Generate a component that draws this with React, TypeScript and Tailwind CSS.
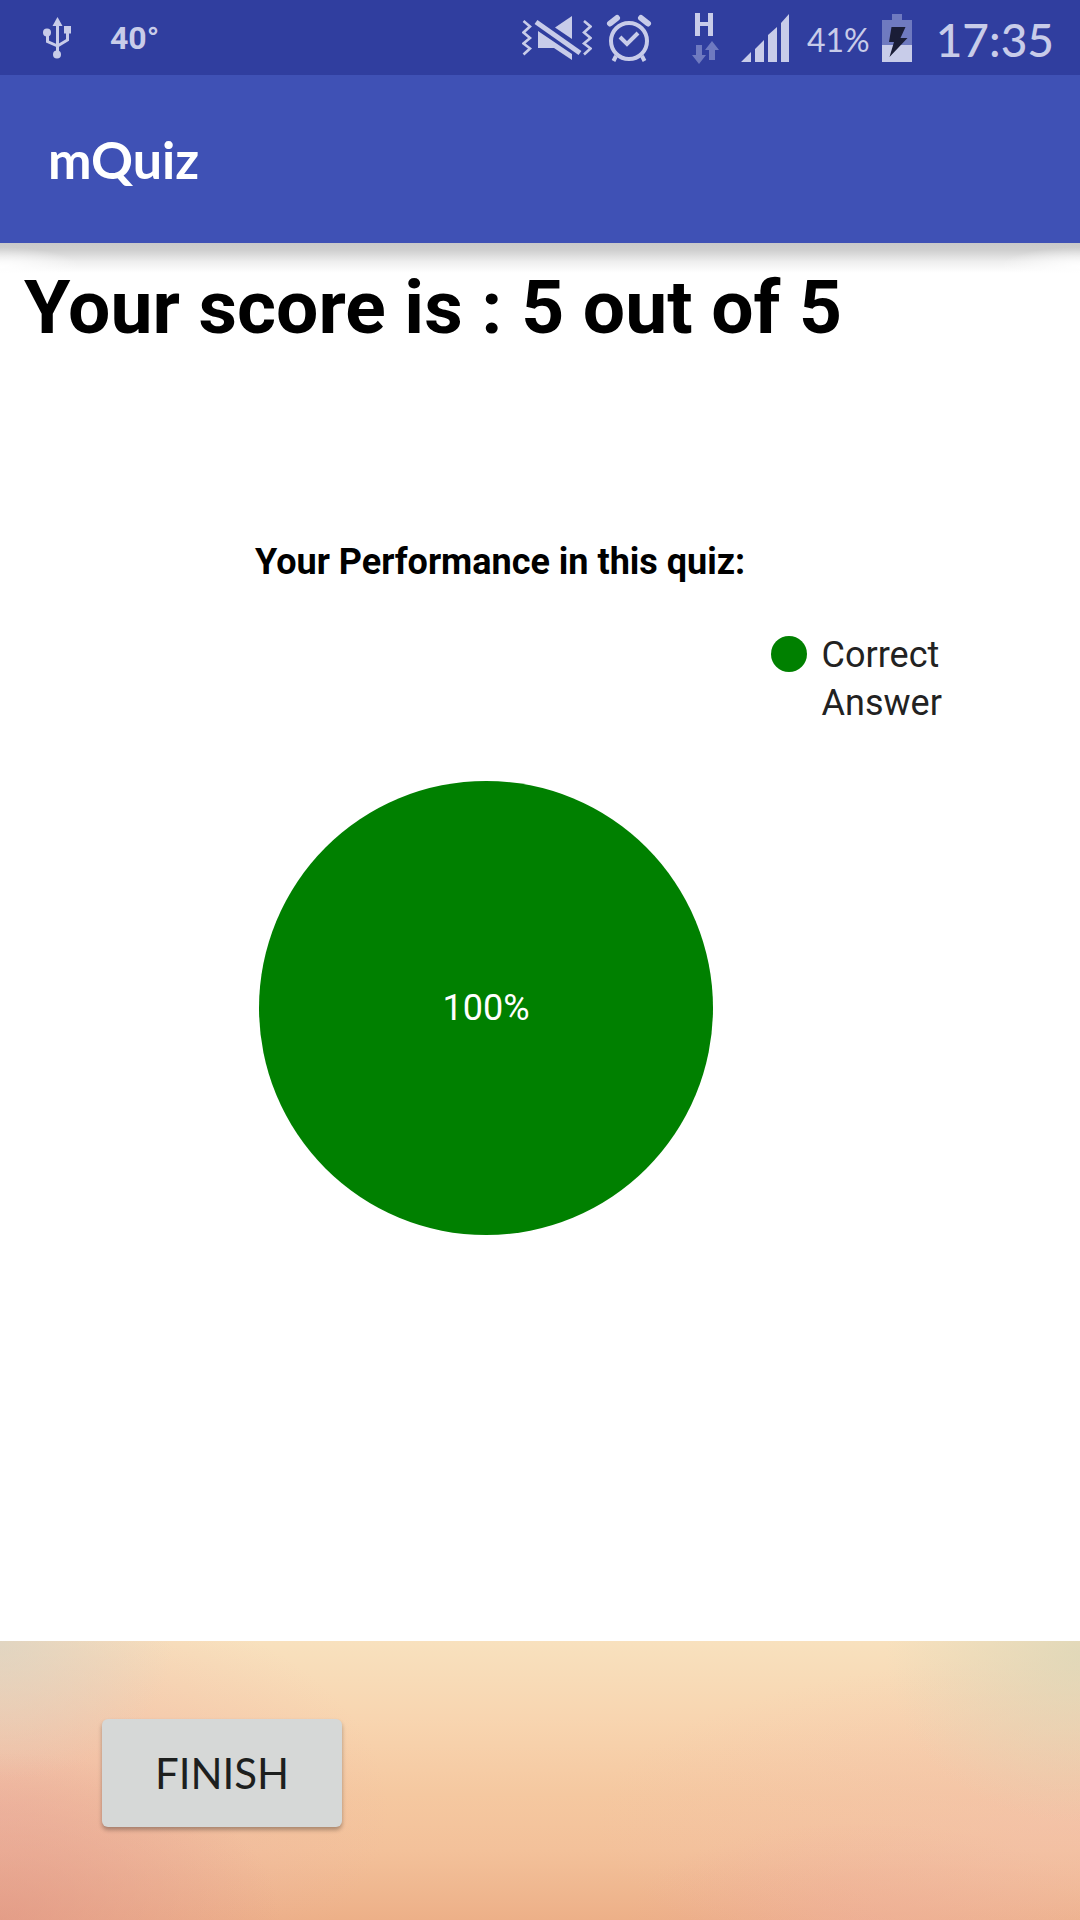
import React from "react";

const ICON = "#c8cce9";

function UsbIcon() {
  return (
    <svg width="30" height="44" viewBox="42 16 30 44" aria-label="USB connected" role="img">
      <g fill={ICON}>
        <path d="M57.500 17l5 9h-10z" />
        <rect x="56" y="24" width="3" height="30" />
        <circle cx="57" cy="54.500" r="4" />
        <circle cx="47" cy="32.500" r="4" />
        <rect x="64" y="26" width="7" height="7.500" />
      </g>
      <path d="M47.500 33v8.500l10 4.500M67.500 32v8l-10 6" fill="none" stroke={ICON} strokeWidth="3" />
    </svg>
  );
}

function MutedIcon() {
  return (
    <svg width="70" height="46" viewBox="522 14 70 46" aria-label="Vibrate" role="img">
      <g fill="none" stroke={ICON} strokeWidth="2.600">
        <path d="M523.500 20l6.500 5.500-6.500 6 6.500 5.500-6.500 5.500 6.500 5-6.500 6" />
        <path d="M584 20l6.500 5.500-6.500 6 6.500 5.500-6.500 5.500 6.500 5-6.500 6" />
      </g>
      <g fill={ICON}>
        <path d="M572 15v23l-17-11.500z" />
        <path d="M538 30l34 23v6l-18-12h-16z" />
      </g>
      <path d="M536 21l44 31" stroke={ICON} strokeWidth="5" />
    </svg>
  );
}

function AlarmIcon() {
  return (
    <svg width="46" height="48" viewBox="606 13 46 48" aria-label="Alarm set" role="img">
      <g fill="none" stroke={ICON}>
        <circle cx="629" cy="40" r="18" strokeWidth="4" />
        <path d="M620 36l7 7 11-11" strokeWidth="4" />
        <path d="M616 55l-2.500 5M642 55l2.500 5" strokeWidth="4" />
        <path d="M610 22.500l7-5.500M648 22.500l-7-5.500" strokeWidth="6" strokeLinecap="round" />
      </g>
    </svg>
  );
}

function DataIcon() {
  return (
    <svg width="28" height="54" viewBox="692 10 28 54" aria-label="H mobile data" role="img">
      <path d="M695 12h5v9h8v-9h5v23h-5v-10h-8v10h-5z" fill={ICON} />
      <path d="M696 44h6v10h4l-7 9-7-9h4z" fill="#6f7ac0" />
      <path d="M709 59v-10h-4l7-9 7 9h-4v10z" fill="#6f7ac0" />
    </svg>
  );
}

function SignalIcon() {
  return (
    <svg width="50" height="50" viewBox="739 12 50 50" aria-label="Signal strength" role="img">
      <path
        d="M740 61l10-10v10zM754 61v-13l9-9v22zM767 61v-27l9-8v35zM780 61v-39l8-9v48z"
        fill={ICON}
      />
    </svg>
  );
}

function BatteryIcon() {
  return (
    <svg width="30" height="48" viewBox="882 12 30 48" aria-label="Charging" role="img">
      <path d="M892 12h10v6h10v25h-30v-25h10z" fill="#6f7ac0" />
      <path d="M882 43h30v17h-30z" fill={ICON} />
      <path d="M891.500 25h14l-5 11h7l-18 19 4.500-15h-5z" fill="#1a1d36" />
    </svg>
  );
}

function StatusBar() {
  return (
    <div className="flex h-[75px] items-center justify-between bg-[#303e9f] pr-[26px] pl-[42px] text-[#c8cce9]">
      <div className="flex items-center gap-[38px]">
        <UsbIcon />
        <span className="text-[32px] leading-none font-bold">40°</span>
      </div>
      <div className="flex items-center">
        <MutedIcon />
        <span className="ml-[14px] flex">
          <AlarmIcon />
        </span>
        <span className="ml-10 flex">
          <DataIcon />
        </span>
        <span className="ml-5 flex">
          <SignalIcon />
        </span>
        <span className="ml-[17px] pt-1 font-['Lato',sans-serif] text-[32px] leading-none">41%</span>
        <span className="ml-3 flex">
          <BatteryIcon />
        </span>
        <span className="ml-6 pt-1 font-['Lato',sans-serif] text-[46px] leading-none font-medium">17:35</span>
      </div>
    </div>
  );
}

export default function App() {
  return (
    <div className="flex min-h-screen flex-col bg-white font-['Roboto',sans-serif] text-black">
      <StatusBar />
      <header className="flex h-[168px] items-center bg-[#3f51b5] px-12">
        <h1 className="font-['Lato',sans-serif] text-[52px] leading-none font-bold text-white">mQuiz</h1>
      </header>
      <div className="h-[30px] bg-[radial-gradient(ellipse_80px_20px_at_0%_80%,#ffffff_0%,transparent_100%),radial-gradient(ellipse_80px_20px_at_100%_80%,#ffffff_0%,transparent_100%),linear-gradient(to_bottom,#c9c9c9_0%,#d0d0d0_25%,#eeeeee_62%,#ffffff_100%)]" />

      <main className="flex flex-1 flex-col">
        <h2 className="-mt-[10px] px-6 text-[75px] leading-[88px] font-bold">Your score is : 5 out of 5</h2>
        <section aria-label="Performance chart" className="mt-[187px] grid grid-cols-[72%_1fr]">
          <h3 className="col-span-2 pl-[255px] text-[36px] leading-[48px] font-bold">
            Your Performance in this quiz:
          </h3>
          <div className="col-start-2 mt-[45px] -ml-[7px] flex items-start gap-[15px] text-[36px] leading-[48px] text-[#222222]">
            <span className="mt-[5px] size-9 shrink-0 rounded-full bg-[#008000]" />
            <span className="w-[130px]">Correct Answer</span>
          </div>
          <div className="col-span-2 mt-[54px] ml-[259px] flex size-[454px] items-center justify-center rounded-full bg-[#008000] text-[36px] text-white">
            100%
          </div>
        </section>
      </main>

      <footer className="flex h-[279px] items-start bg-[radial-gradient(ellipse_26%_60%_at_0%_100%,rgba(222,145,130,0.6)_0%,rgba(222,145,130,0)_100%),radial-gradient(ellipse_16%_50%_at_0%_0%,rgba(218,212,196,0.75)_0%,rgba(218,212,196,0)_100%),radial-gradient(ellipse_18%_60%_at_100%_5%,rgba(218,214,184,0.75)_0%,rgba(218,214,184,0)_100%),radial-gradient(ellipse_36%_80%_at_0%_60%,rgba(236,176,164,0.6)_0%,rgba(236,176,164,0)_100%),radial-gradient(ellipse_45%_60%_at_100%_65%,rgba(243,192,176,0.5)_0%,rgba(243,192,176,0)_100%),radial-gradient(ellipse_22%_35%_at_80%_100%,rgba(238,172,150,0.6)_0%,rgba(238,172,150,0)_100%),linear-gradient(to_bottom,#f8e1be_0%,#f8d5b0_28%,#f5c8a0_55%,#f3c19a_75%,#edb088_100%)] px-[102px] pt-[78px]">
        <button
          type="button"
          className="h-[108px] w-60 rounded-md bg-[#d6d8d7] font-['Lato',sans-serif] text-[42px] leading-none text-[#1d1f1e] shadow-[0_3px_4px_rgba(0,0,0,0.3)]"
        >
          FINISH
        </button>
      </footer>
    </div>
  );
}
